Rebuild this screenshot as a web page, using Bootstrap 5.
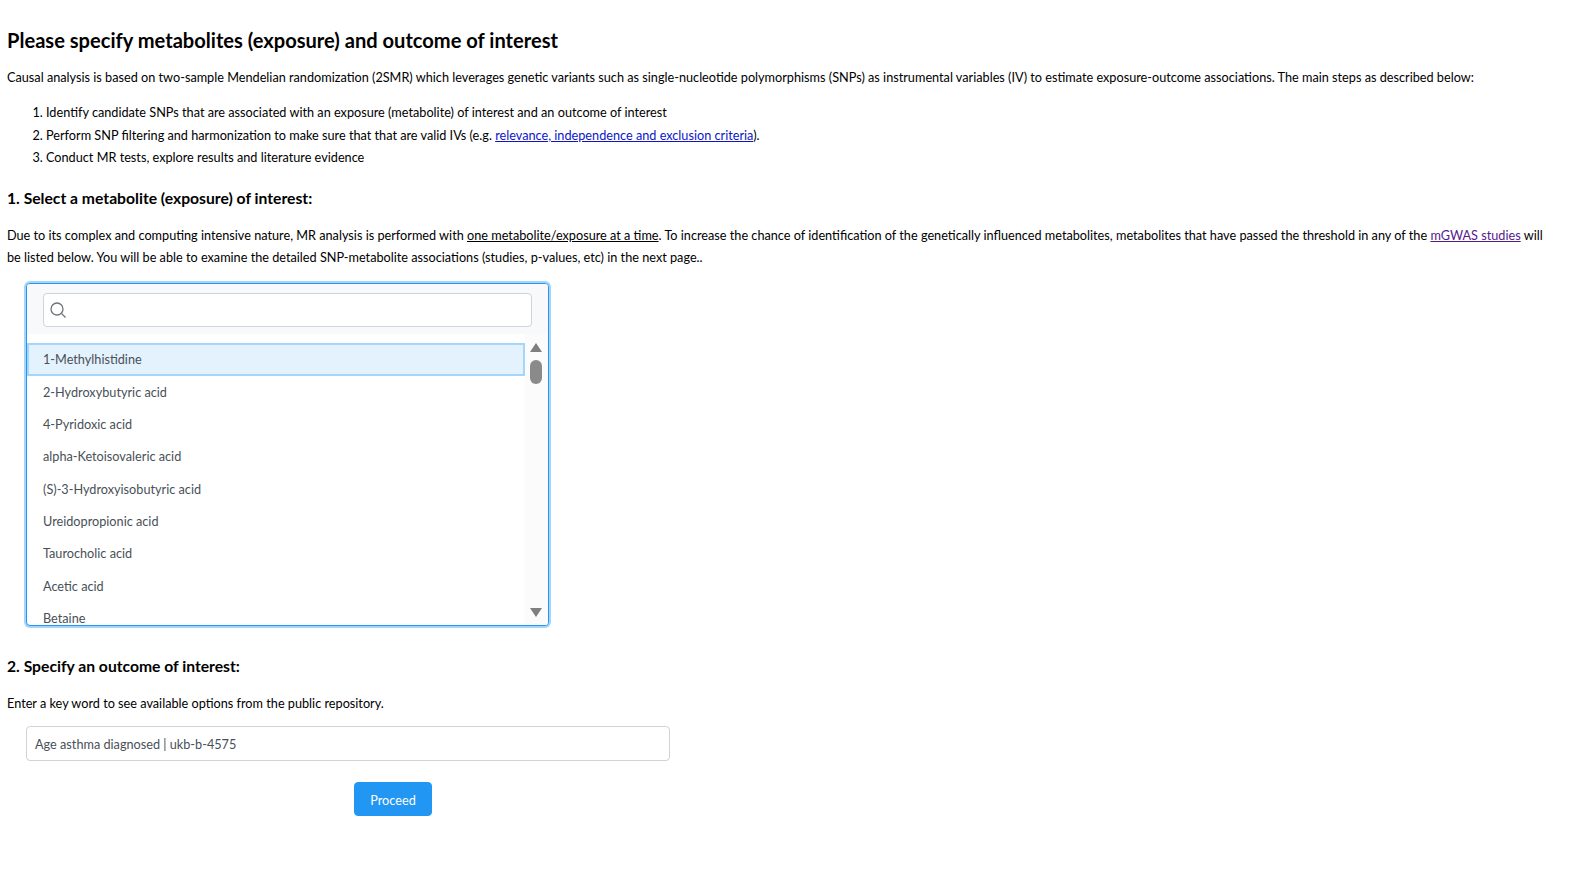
<!DOCTYPE html>
<html lang="en"><head><meta charset="utf-8"><title>Causal analysis</title>
<link href="https://cdn.jsdelivr.net/npm/bootstrap@5.3.0/dist/css/bootstrap.min.css" rel="stylesheet">
<style>
body{font-family:"Lato","Open Sans",sans-serif;font-size:12.7px;line-height:22px;color:#000;background:#fff}
.page-wrap{padding:27px 7px 0 7px}
.main-title{font-size:20.1px;font-weight:700;line-height:27px;margin:0 0 12px}
.sec-title{font-size:15.7px;font-weight:700;line-height:22px;margin:0 0 15px}
.intro{margin:0 0 13px}
.steps{margin:0 0 18px;padding-left:39px}
.steps li{line-height:22.5px}
.steps a{color:#0d16c9}
.studies{color:#551a8b}
.wrap-note{max-width:1540px;margin:0}
.picker{width:523px;height:343px;margin:15px 0 0 19px;border:1px solid #2196f3;box-shadow:0 0 0 2px #a6d5fa;border-radius:4px;overflow:hidden;background:#fff}
.search-band{background:#f8f9fa;height:50px;padding:9px 16px 0 16px}
.search-box{height:34px;background:#fff;border:1px solid #ced4da;border-radius:4px;padding-left:5px}
.list-pane{height:291px}
.opt-list{flex:1;padding:9px 0 0;margin:0;list-style:none;overflow:hidden;color:#495057;font-size:12.7px}
.opt-list li{height:32.4px;line-height:32.4px;padding-left:16px}
.opt-list li.sel{height:33px;line-height:28px;padding-left:14px;background:#e3f2fd;border:2px solid #a6d5fa}
.scroll-rail{width:23px;background:#fbfbfb;padding:9px 2px 0 0}
.thumb{width:12px;height:24px;border-radius:6px;background:#8a8a8a;margin:8px auto 0}
.arrow-up,.arrow-down{width:0;height:0;margin:0 auto;border-left:6px solid transparent;border-right:6px solid transparent}
.arrow-up{border-bottom:9px solid #7f7f7f}
.arrow-down{border-top:9px solid #7f7f7f;margin-top:auto;margin-bottom:8px}
.picker-next{margin-top:29px}
.pick-note{margin:0 0 12px}
.outcome{width:644px;height:35px;margin:0 0 21px 19px;border:1px solid #ced4da;border-radius:4px;padding:0 8px;color:#495057;line-height:35px;display:block;font-size:12.7px;background:#fff}
.proceed{width:78px;height:34px;margin-left:347px;padding:4px 0 0;background:#2196f3;border:1px solid #2196f3;color:#fff;font-size:12.7px;border-radius:4px}
</style></head><body>
<div class="page-wrap">
<h1 class="main-title">Please specify metabolites (exposure) and outcome of interest</h1>
<p class="intro">Causal analysis is based on two-sample Mendelian randomization (2SMR) which leverages genetic variants such as single-nucleotide polymorphisms (SNPs) as instrumental variables (IV) to estimate exposure-outcome associations. The main steps as described below:</p>
<ol class="steps">
<li>Identify candidate SNPs that are associated with an exposure (metabolite) of interest and an outcome of interest</li>
<li>Perform SNP filtering and harmonization to make sure that that are valid IVs (e.g. <a href="#">relevance, independence and exclusion criteria</a>).</li>
<li>Conduct MR tests, explore results and literature evidence</li>
</ol>
<h2 class="sec-title">1. Select a metabolite (exposure) of interest:</h2>
<p class="wrap-note">Due to its complex and computing intensive nature, MR analysis is performed with <u>one metabolite/exposure at a time</u>. To increase the chance of identification of the genetically influenced metabolites, metabolites that have passed the threshold in any of the <a class="studies" href="#">mGWAS studies</a> will be listed below. You will be able to examine the detailed SNP-metabolite associations (studies, p-values, etc) in the next page..</p>
<div class="picker">
<div class="search-band"><div class="search-box d-flex align-items-center">
<svg width="18" height="18" viewBox="0 0 18 18" fill="none" stroke="#6c757d" stroke-width="1.3"><circle cx="8" cy="8" r="6"/><path d="M12.4 12.4 16.5 16.5"/></svg>
</div></div>
<div class="list-pane d-flex">
<ul class="opt-list">
<li class="sel">1-Methylhistidine</li>
<li>2-Hydroxybutyric acid</li>
<li>4-Pyridoxic acid</li>
<li>alpha-Ketoisovaleric acid</li>
<li>(S)-3-Hydroxyisobutyric acid</li>
<li>Ureidopropionic acid</li>
<li>Taurocholic acid</li>
<li>Acetic acid</li>
<li>Betaine</li>
</ul>
<div class="scroll-rail d-flex flex-column"><div class="arrow-up"></div><div class="thumb"></div><div class="arrow-down"></div></div>
</div>
</div>
<h2 class="sec-title picker-next">2. Specify an outcome of interest:</h2>
<p class="pick-note">Enter a key word to see available options from the public repository.</p>
<div class="outcome">Age asthma diagnosed | ukb-b-4575</div>
<button type="button" class="btn proceed">Proceed</button>
</div>
</body></html>
